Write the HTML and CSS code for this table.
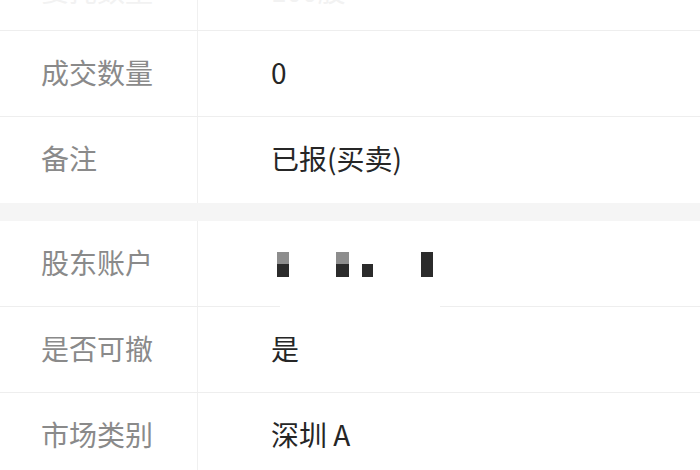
FILE: index.html
```html
<!DOCTYPE html>
<html lang="zh-CN">
<head>
<meta charset="utf-8">
<title>委托详情</title>
<link rel="stylesheet" href="styles.css">
</head>
<body>
<div class="page">
  <section class="group group-first">
    <div class="row">
      <div class="label faint">委托数量</div>
      <div class="value faint">100股</div>
    </div>
    <div class="row">
      <div class="label">成交数量</div>
      <div class="value">0</div>
    </div>
    <div class="row row-last">
      <div class="label">备注</div>
      <div class="value">已报(买卖)</div>
    </div>
  </section>
  <div class="band"></div>
  <section class="group">
    <div class="row row-masked">
      <div class="label">股东账户</div>
      <div class="value">
        <div class="mask">
          <span class="blk blk-two"></span>
          <span class="blk blk-two gap-wide"></span>
          <span class="blk blk-short gap-narrow"></span>
          <span class="blk blk-full gap-wide2"></span>
        </div>
      </div>
      <span class="erase"></span>
    </div>
    <div class="row">
      <div class="label">是否可撤</div>
      <div class="value">是</div>
    </div>
    <div class="row row-last">
      <div class="label">市场类别</div>
      <div class="value">深圳 A</div>
    </div>
  </section>
</div>
</body>
</html>
```

FILE: styles.css
```css
html, body {
  margin: 0;
  padding: 0;
  background: #ffffff;
}
body {
  width: 700px;
  height: 470px;
  overflow: hidden;
  font-family: "Noto Sans CJK SC", "Noto Sans", sans-serif;
}
.page {
  display: flex;
  flex-direction: column;
}
.group-first {
  margin-top: -55px;
}
.group {
  display: flex;
  flex-direction: column;
  background: #fff;
}
.row {
  position: relative;
  display: flex;
  height: 86px;
  box-sizing: border-box;
  border-bottom: 1px solid #eeeeee;
}
.row-last {
  border-bottom: none;
}
.label {
  flex: none;
  border-right: 1px solid #f0f0f0;
  display: flex;
  align-items: center;
  padding-left: 41px;
  padding-bottom: 4px;
  box-sizing: content-box;
  width: 156px;
  font-size: 28px;
  color: #8a8a8a;
}
.value {
  flex: 1;
  display: flex;
  align-items: center;
  padding-left: 73px;
  padding-bottom: 4px;
  font-size: 28px;
  color: #262626;
}
.faint {
  color: #f2f2f2;
  padding-top: 4px;
  padding-bottom: 0;
}
.band {
  height: 18px;
  background: #f5f5f5;
}
.mask {
  display: flex;
  align-items: flex-end;
  height: 25px;
  margin-left: 6px;
  margin-top: 6px;
}
.blk {
  display: block;
  width: 12px;
  background: #2b2b2b;
}
.blk-two {
  height: 25px;
  background: linear-gradient(#8d8d8d 0 50%, #2b2b2b 50% 100%);
}
.blk-short {
  height: 13px;
  width: 11px;
}
.blk-full {
  height: 25px;
}
.gap-wide {
  margin-left: 47px;
  width: 13px;
}
.gap-narrow {
  margin-left: 13px;
}
.gap-wide2 {
  margin-left: 48px;
}
.erase {
  position: absolute;
  left: 280px;
  bottom: -1px;
  width: 160px;
  height: 2px;
  background: #fff;
}
```
